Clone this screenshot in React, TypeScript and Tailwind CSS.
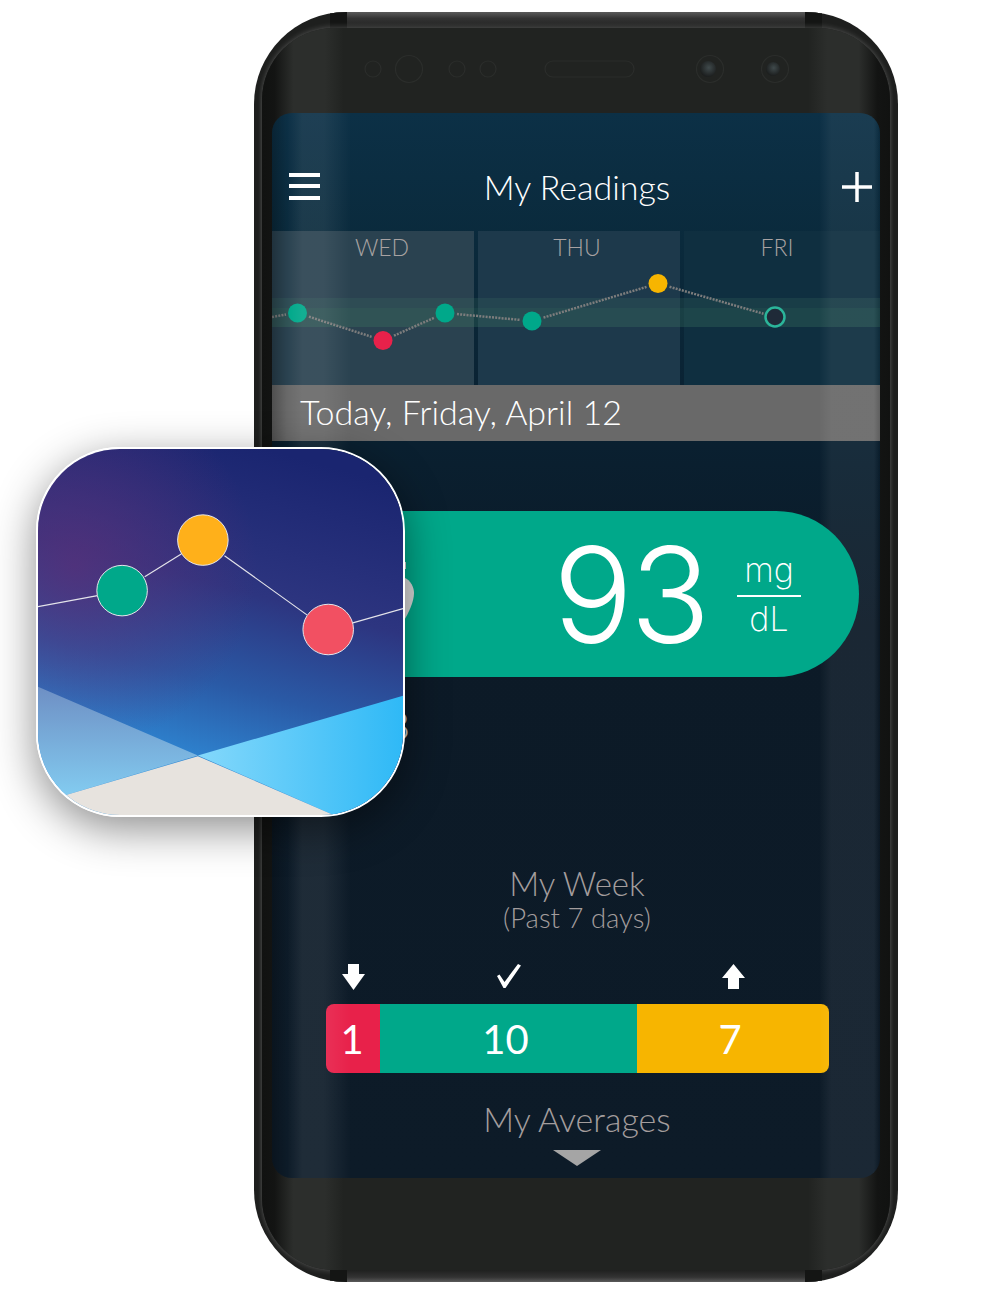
const sans = "font-['Lato','Liberation_Sans',sans-serif]";

const points = [
  { x: 25.5, y: 82, color: "#00a88a" },
  { x: 111, y: 109.5, color: "#e8214a" },
  { x: 173, y: 82, color: "#00a88a" },
  { x: 260, y: 90, color: "#00a88a" },
  { x: 386, y: 52.5, color: "#f7b500" },
];
const today = { x: 503, y: 86 };

function Segment({ a, b }: { a: { x: number; y: number }; b: { x: number; y: number } }) {
  const len = Math.hypot(b.x - a.x, b.y - a.y);
  const ux = (b.x - a.x) / len;
  const uy = (b.y - a.y) / len;
  return (
    <line
      x1={a.x + ux * 12}
      y1={a.y + uy * 12}
      x2={b.x - ux * 12}
      y2={b.y - uy * 12}
      stroke="#7d7d7d"
      strokeWidth="2.5"
      strokeDasharray="2 1.2"
    />
  );
}

function ReadingsChart() {
  const all = [...points, today];
  return (
    <div className="relative flex h-[154px] gap-[4px]">
      <div className="w-[202px] bg-[#2a4250] pl-[18px] text-center text-[23px] font-light leading-[32px] text-[#a8a2a2]">WED</div>
      <div className="w-[202px] bg-[#1d394b] pr-[4px] text-center text-[23px] font-light leading-[32px] text-[#a8a2a2]">THU</div>
      <div className="flex-1 bg-[#0f2f40] pr-[10px] text-center text-[23px] font-light leading-[32px] text-[#a8a2a2]">FRI</div>
      <div className="absolute inset-x-0 top-[67px] h-[10px] bg-[#3f7a62]/20" />
      <div className="absolute inset-x-0 top-[77px] h-[19px] bg-[#3f7a62]/30" />
      <svg className="absolute inset-0" width="608" height="154" viewBox="0 0 608 154">
        <line x1="0" y1="86" x2="14" y2="83.5" stroke="#7d7d7d" strokeWidth="2.5" strokeDasharray="2 1.2" />
        {all.slice(1).map((p, i) => (
          <Segment key={i} a={all[i]} b={p} />
        ))}
        {points.map((p) => (
          <circle key={p.x} cx={p.x} cy={p.y} r="9.5" fill={p.color} />
        ))}
        <circle cx={today.x} cy={today.y} r="9.5" fill="#1f2a38" stroke="#2bb59a" strokeWidth="2.5" />
      </svg>
    </div>
  );
}

function AppIcon() {
  return (
    <div className="absolute left-[36px] top-[447px] z-20 h-[370px] w-[369px] overflow-hidden rounded-[84px] border-2 border-white shadow-[0_12px_44px_rgba(0,0,0,0.45)]">
      <svg className="block" width="365" height="366" viewBox="111 53 1098 1101" preserveAspectRatio="none">
        <defs>
          <linearGradient id="sky" x1="0.62" y1="0" x2="0.38" y2="0.9">
            <stop offset="0" stopColor="#1a2570" />
            <stop offset="0.42" stopColor="#2d3580" />
            <stop offset="0.7" stopColor="#2a5aa6" />
            <stop offset="1" stopColor="#2f8fdb" />
          </linearGradient>
          <radialGradient id="glow" cx="0.1" cy="0.32" r="0.5">
            <stop offset="0" stopColor="#5a2f78" stopOpacity="0.75" />
            <stop offset="1" stopColor="#5a2f78" stopOpacity="0" />
          </radialGradient>
          <linearGradient id="rightHill" x1="0" y1="0" x2="1" y2="0">
            <stop offset="0" stopColor="#84d8fb" />
            <stop offset="1" stopColor="#2fb9f6" />
          </linearGradient>
          <linearGradient id="leftHill" x1="0" y1="0" x2="0" y2="1">
            <stop offset="0" stopColor="#6e8fc4" />
            <stop offset="1" stopColor="#86d6f8" />
          </linearGradient>
        </defs>
        <rect x="111" y="53" width="1098" height="1101" fill="url(#sky)" />
        <rect x="111" y="53" width="1098" height="1101" fill="url(#glow)" />
        <polygon points="111,768 592,975 195,1094 111,1154" fill="url(#leftHill)" />
        <polygon points="1209,795 592,975 1000,1154 1209,1154" fill="url(#rightHill)" />
        <polygon points="592,977 1000,1154 111,1154 195,1094" fill="#e7e3de" />
        <g stroke="#e4e4ea" strokeWidth="3.5" fill="none">
          <line x1="111" y1="527" x2="290" y2="494" />
          <line x1="432" y1="437" x2="542" y2="369" />
          <line x1="672" y1="374" x2="920" y2="552" />
          <line x1="1058" y1="576" x2="1209" y2="533" />
        </g>
        <g stroke="#e6e6ea" strokeWidth="3">
          <circle cx="364" cy="479" r="76" fill="#00a88a" />
          <circle cx="607" cy="327" r="76" fill="#ffb01a" />
          <circle cx="984" cy="596" r="76" fill="#f25062" />
        </g>
      </svg>
    </div>
  );
}

export default function App() {
  return (
    <div className={`relative h-[1294px] w-[1000px] overflow-hidden bg-white pl-[254px] pt-[12px] ${sans}`}>
      <div className="flex h-[1270px] w-[644px] flex-col overflow-hidden rounded-[92px] bg-[#1e1f1e]">
        <div className="mx-[76px] flex h-[16px] justify-between bg-[linear-gradient(180deg,#5a5a5a_0%,#333_40%,#1f201f_100%)]">
          <div className="w-[17px] bg-[#141514]" />
          <div className="w-[17px] bg-[#141514]" />
        </div>

        <div className="mx-[8px] flex-1 rounded-[72px] bg-[linear-gradient(90deg,#111211_0%,#131413_2%,#2c2e2c_5%,#2c2e2c_10%,#212321_13%,#212321_87%,#2c2e2c_90%,#2c2e2c_95%,#131413_98%,#111211_100%)] shadow-[0_-2px_5px_rgba(255,255,255,0.14),0_2px_5px_rgba(255,255,255,0.14)]">
          <div className="relative h-[85px] w-full">
            <svg className="absolute left-0 top-0" width="628" height="85" viewBox="262 28 628 85" fill="none" stroke="#2b2d2b" strokeWidth="1.2">
              <defs>
                <radialGradient id="lens" cx="0.55" cy="0.42" r="0.6">
                  <stop offset="0" stopColor="#404a4c" />
                  <stop offset="1" stopColor="#1a1c1c" />
                </radialGradient>
              </defs>
              <circle cx="373" cy="69" r="8" />
              <circle cx="409" cy="69" r="13.5" />
              <circle cx="457" cy="69" r="8" />
              <circle cx="488" cy="69" r="8" />
              <rect x="545" y="61" width="89" height="16" rx="8" />
              <circle cx="710" cy="69" r="13.5" />
              <circle cx="708" cy="69" r="8" fill="url(#lens)" stroke="none" />
              <circle cx="775" cy="69" r="13.5" />
              <circle cx="773" cy="69" r="7" fill="url(#lens)" stroke="none" />
            </svg>
          </div>

          <div className="relative mx-[10px] flex h-[1065px] flex-col overflow-hidden rounded-[20px] bg-[linear-gradient(180deg,#0c3046_0%,#0a2a3c_12%,#0a1f2f_33%,#0c1a27_48%,#0d1b28_100%)]">
            <header className="grid h-[118px] grid-cols-[1fr_auto_1fr] items-center pl-[17px] pr-[7px] pt-[28px] text-white">
              <div className="flex w-[31px] flex-col gap-[7.5px]">
                <div className="h-[4px] bg-white" />
                <div className="h-[4px] bg-white" />
                <div className="h-[4px] bg-white" />
              </div>
              <h1 className="mr-[8px] text-[34px] font-light">My Readings</h1>
              <svg className="mt-[2px] justify-self-end" width="32" height="32" viewBox="0 0 32 32" stroke="white" strokeWidth="3.5">
                <line x1="1" y1="16" x2="31" y2="16" />
                <line x1="16" y1="1" x2="16" y2="31" />
              </svg>
            </header>

            <ReadingsChart />

            <div className="flex h-[56px] items-center bg-[#696969] pb-[4px] pl-[28px] text-[34px] font-light text-white">
              Today, Friday, April 12
            </div>

            <div className="relative z-10 mr-[21px] mt-[70px] flex h-[166px] items-center rounded-r-[83px] bg-[#00a88a] pl-[83px] text-white">
              <svg width="61" height="65" viewBox="0 0 61 65" fill="#d9d9d9">
                <path d="M49 15.5C56 18 59 26 59 31C59 40 53 52 49 58.5L0 30Z" />
                <rect x="49" y="0" width="2" height="7" />
              </svg>
              <span className="ml-[137px] w-[156px] text-[133px] font-light leading-none tracking-[-3px] [font-family:Inter,sans-serif]">93</span>
              <div className="ml-[28px] flex w-[64px] flex-col items-center text-[34px] font-extralight leading-none [font-family:Inter,sans-serif]">
                <span className="pb-[8px]">mg</span>
                <div className="h-[2px] w-full bg-white" />
                <span className="pt-[5px]">dL</span>
              </div>
            </div>

            <div className="mt-[28px] w-[138px] text-right text-[40px] font-light leading-[40px] text-[#c9c9c9]">8</div>

            <div className="mt-[118px] pl-[2px] text-center text-[#a39d9d]">
              <div className="text-[33px] font-light leading-[40px]">My Week</div>
              <div className="text-[27.5px] font-light leading-[30px]">(Past 7 days)</div>
            </div>

            <div className="ml-[54px] mt-[31px] grid w-[503px] grid-cols-[54px_257px_192px]">
              <div className="flex h-[25px] justify-center">
                <svg width="23" height="26" viewBox="0 0 23 26" fill="white">
                  <polygon points="6,0 17,0 17,10 23,10 11.5,26 0,10 6,10" />
                </svg>
              </div>
              <div className="flex h-[25px] justify-center">
                <svg width="24" height="24" viewBox="0 0 24 24" fill="white">
                  <path d="M0 12L2.5 10.5L7.5 18L21 0L24 1.5L8.5 24L6.5 24Z" />
                </svg>
              </div>
              <div className="flex h-[25px] justify-center">
                <svg width="23" height="25" viewBox="0 0 23 25" fill="white">
                  <polygon points="11.5,0 23,14 17,14 17,25 6,25 6,14 0,14" />
                </svg>
              </div>

              <div className="mt-[15px] flex h-[69px] items-center justify-center rounded-l-[8px] bg-[#e8214a] pr-[2px] text-[40px] text-white">1</div>
              <div className="mt-[15px] flex h-[69px] items-center justify-center bg-[#00a88a] pr-[6px] text-[40px] text-white">10</div>
              <div className="mt-[15px] flex h-[69px] items-center justify-center rounded-r-[8px] bg-[#f7b500] pr-[6px] text-[40px] text-white">7</div>
            </div>

            <div className="mt-[26px] pl-[2px] text-center text-[34px] font-light leading-[40px] text-[#a39d9d]">My Averages</div>
            <svg className="ml-[281px] mt-[11px]" width="48" height="16" viewBox="0 0 48 16" fill="#a5a5a5">
              <polygon points="0,0 48,0 24,16" />
            </svg>

            <div className="pointer-events-none absolute inset-0 bg-[linear-gradient(90deg,rgba(0,0,0,0.25)_0%,rgba(255,255,255,0)_2.5%,rgba(255,255,255,0.075)_5%,rgba(255,255,255,0.075)_8.5%,rgba(255,255,255,0)_13%,rgba(255,255,255,0)_90%,rgba(255,255,255,0.06)_92%,rgba(255,255,255,0.06)_99%,rgba(0,0,0,0.1)_100%)]" />
          </div>
        </div>

        <div className="mx-[76px] flex h-[12px] justify-between bg-[linear-gradient(0deg,#5a5a5a_0%,#333_40%,#1f201f_100%)]">
          <div className="w-[17px] bg-[#141514]" />
          <div className="w-[17px] bg-[#141514]" />
        </div>
      </div>

      <AppIcon />
    </div>
  );
}
